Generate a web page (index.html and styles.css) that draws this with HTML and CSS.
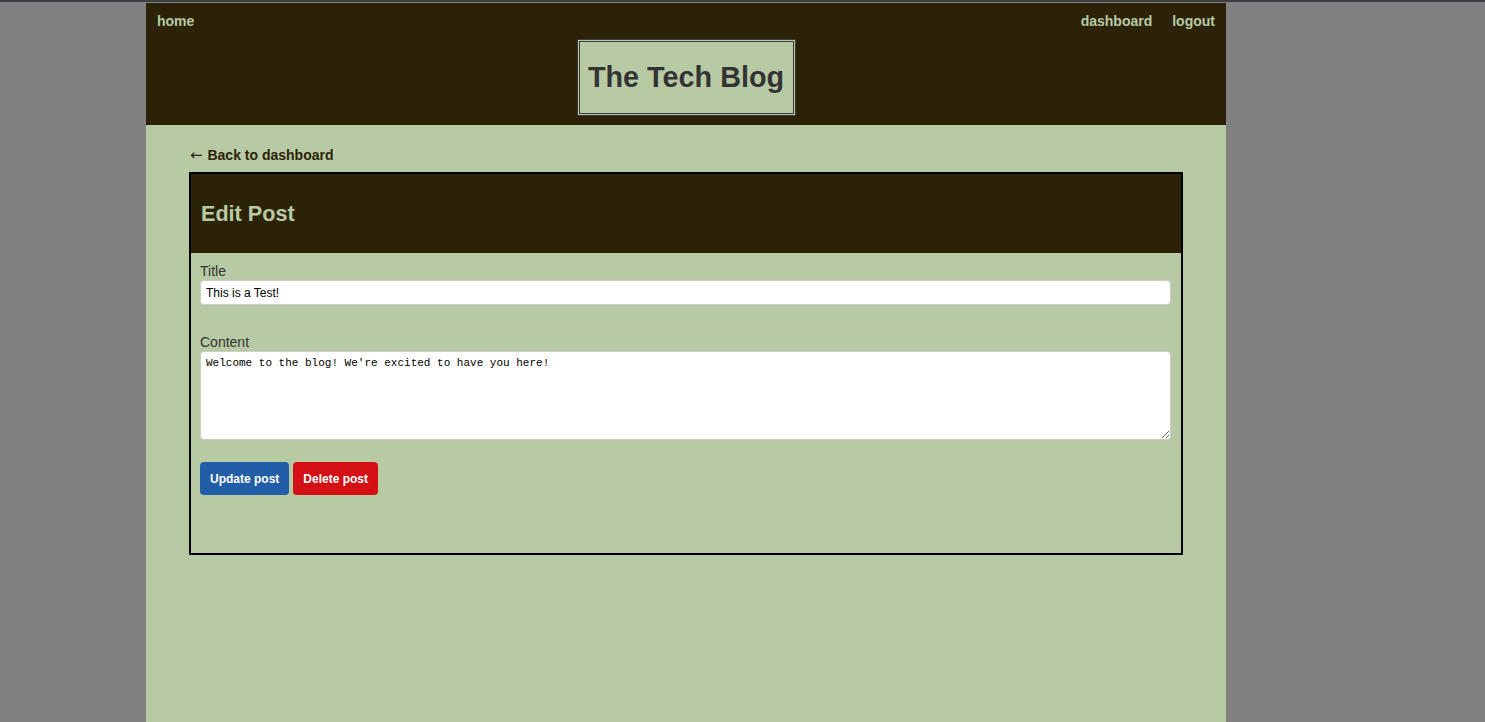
FILE: index.html
```html
<!DOCTYPE html>
<html lang="en">
<head>
<meta charset="utf-8">
<title>The Tech Blog</title>
<link rel="stylesheet" href="styles.css">
</head>
<body>
<div class="topstrip"></div>
<div class="page">
  <header class="site-header">
    <nav class="nav">
      <a class="nav-link" href="#">home</a>
      <div class="nav-right">
        <a class="nav-link" href="#">dashboard</a>
        <a class="nav-link" href="#">logout</a>
      </div>
    </nav>
    <div class="brand-wrap">
      <h1 class="brand">The Tech Blog</h1>
    </div>
  </header>
  <main class="main">
    <a class="back-link" href="#"><span class="back-arrow">&larr;</span> Back to dashboard</a>
    <section class="card">
      <div class="card-header">
        <h2 class="card-title">Edit Post</h2>
      </div>
      <form class="card-body">
        <div class="field">
          <label class="field-label" for="title">Title</label>
          <input class="field-input" id="title" type="text" value="This is a Test!">
        </div>
        <div class="field field-content">
          <label class="field-label" for="content">Content</label>
          <textarea class="field-textarea" id="content">Welcome to the blog! We're excited to have you here!</textarea>
        </div>
        <div class="actions">
          <button class="btn btn-update" type="button">Update post</button>
          <button class="btn btn-delete" type="button">Delete post</button>
        </div>
      </form>
    </section>
  </main>
</div>
</body>
</html>
```

FILE: styles.css
```css
* { box-sizing: border-box; }

html, body {
  margin: 0;
  padding: 0;
}

body {
  background: #808080;
  font-family: "Liberation Sans", Arial, sans-serif;
  overflow: hidden;
}

.topstrip {
  height: 2px;
  background: #3c3f43;
  margin-bottom: 1px;
}

.page {
  width: 1080px;
  margin-left: 146px;
  min-height: calc(100vh - 3px);
  background: #b8caa4;
}

.site-header {
  background: #2c2207;
  height: 122px;
  padding: 0 11px;
}

.nav {
  display: flex;
  justify-content: space-between;
  align-items: center;
  height: 36px;
}

.nav-right {
  display: flex;
  gap: 20px;
}

.nav-link {
  color: #b8caa4;
  font-weight: bold;
  font-size: 14px;
  text-decoration: none;
}

.brand-wrap {
  display: flex;
  justify-content: center;
}

.brand {
  margin: 0;
  width: 219px;
  height: 77px;
  display: flex;
  align-items: center;
  justify-content: center;
  background: #b8caa4;
  border: 3px double #3a3a3a;
  color: #333333;
  font-size: 28.8px;
  font-weight: bold;
}

.main {
  padding: 22px 43px 0 43px;
}

.back-link {
  display: block;
  color: #2c2207;
  font-weight: bold;
  font-size: 14px;
  line-height: 16px;
  text-decoration: none;
  margin-left: 1px;
  margin-bottom: 9px;
}

.back-arrow {
  font-family: "DejaVu Sans", sans-serif;
  font-weight: normal;
  font-size: 15px;
  margin-right: 1px;
}

.card {
  border: 2px solid #000;
}

.card-header {
  background: #2c2207;
  height: 79px;
  display: flex;
  align-items: center;
  padding: 0 10px;
}

.card-title {
  margin: 0;
  color: #b8caa4;
  font-size: 21.6px;
  font-weight: bold;
}

.card-body {
  padding: 10px 10px 58px 9px;
}

.field-label {
  display: block;
  color: #333333;
  font-size: 14px;
  line-height: 16px;
  margin-bottom: 1px;
}

.field-input {
  display: block;
  width: 100%;
  height: 25px;
  border: 1px solid #cccccc;
  border-radius: 4px;
  padding: 0 5px;
  font-family: "Liberation Sans", Arial, sans-serif;
  font-size: 12px;
  color: #000;
  background: #fff;
}

.field-content {
  margin-top: 29px;
}

.field-textarea {
  display: block;
  width: 100%;
  height: 89px;
  border: 1px solid #cccccc;
  border-radius: 4px;
  padding: 5px 5px;
  font-family: "Liberation Mono", "DejaVu Sans Mono", monospace;
  font-size: 11px;
  color: #000;
  background: #fff;
  resize: vertical;
}

.actions {
  margin-top: 22px;
  display: flex;
  gap: 4px;
}

.btn {
  height: 33px;
  padding: 0 10px;
  border: none;
  border-radius: 4px;
  color: #fff;
  font-family: "Liberation Sans", Arial, sans-serif;
  font-size: 12px;
  font-weight: bold;
  cursor: pointer;
}

.btn-update {
  background: #225ea8;
}

.btn-delete {
  background: #d51015;
}
```
